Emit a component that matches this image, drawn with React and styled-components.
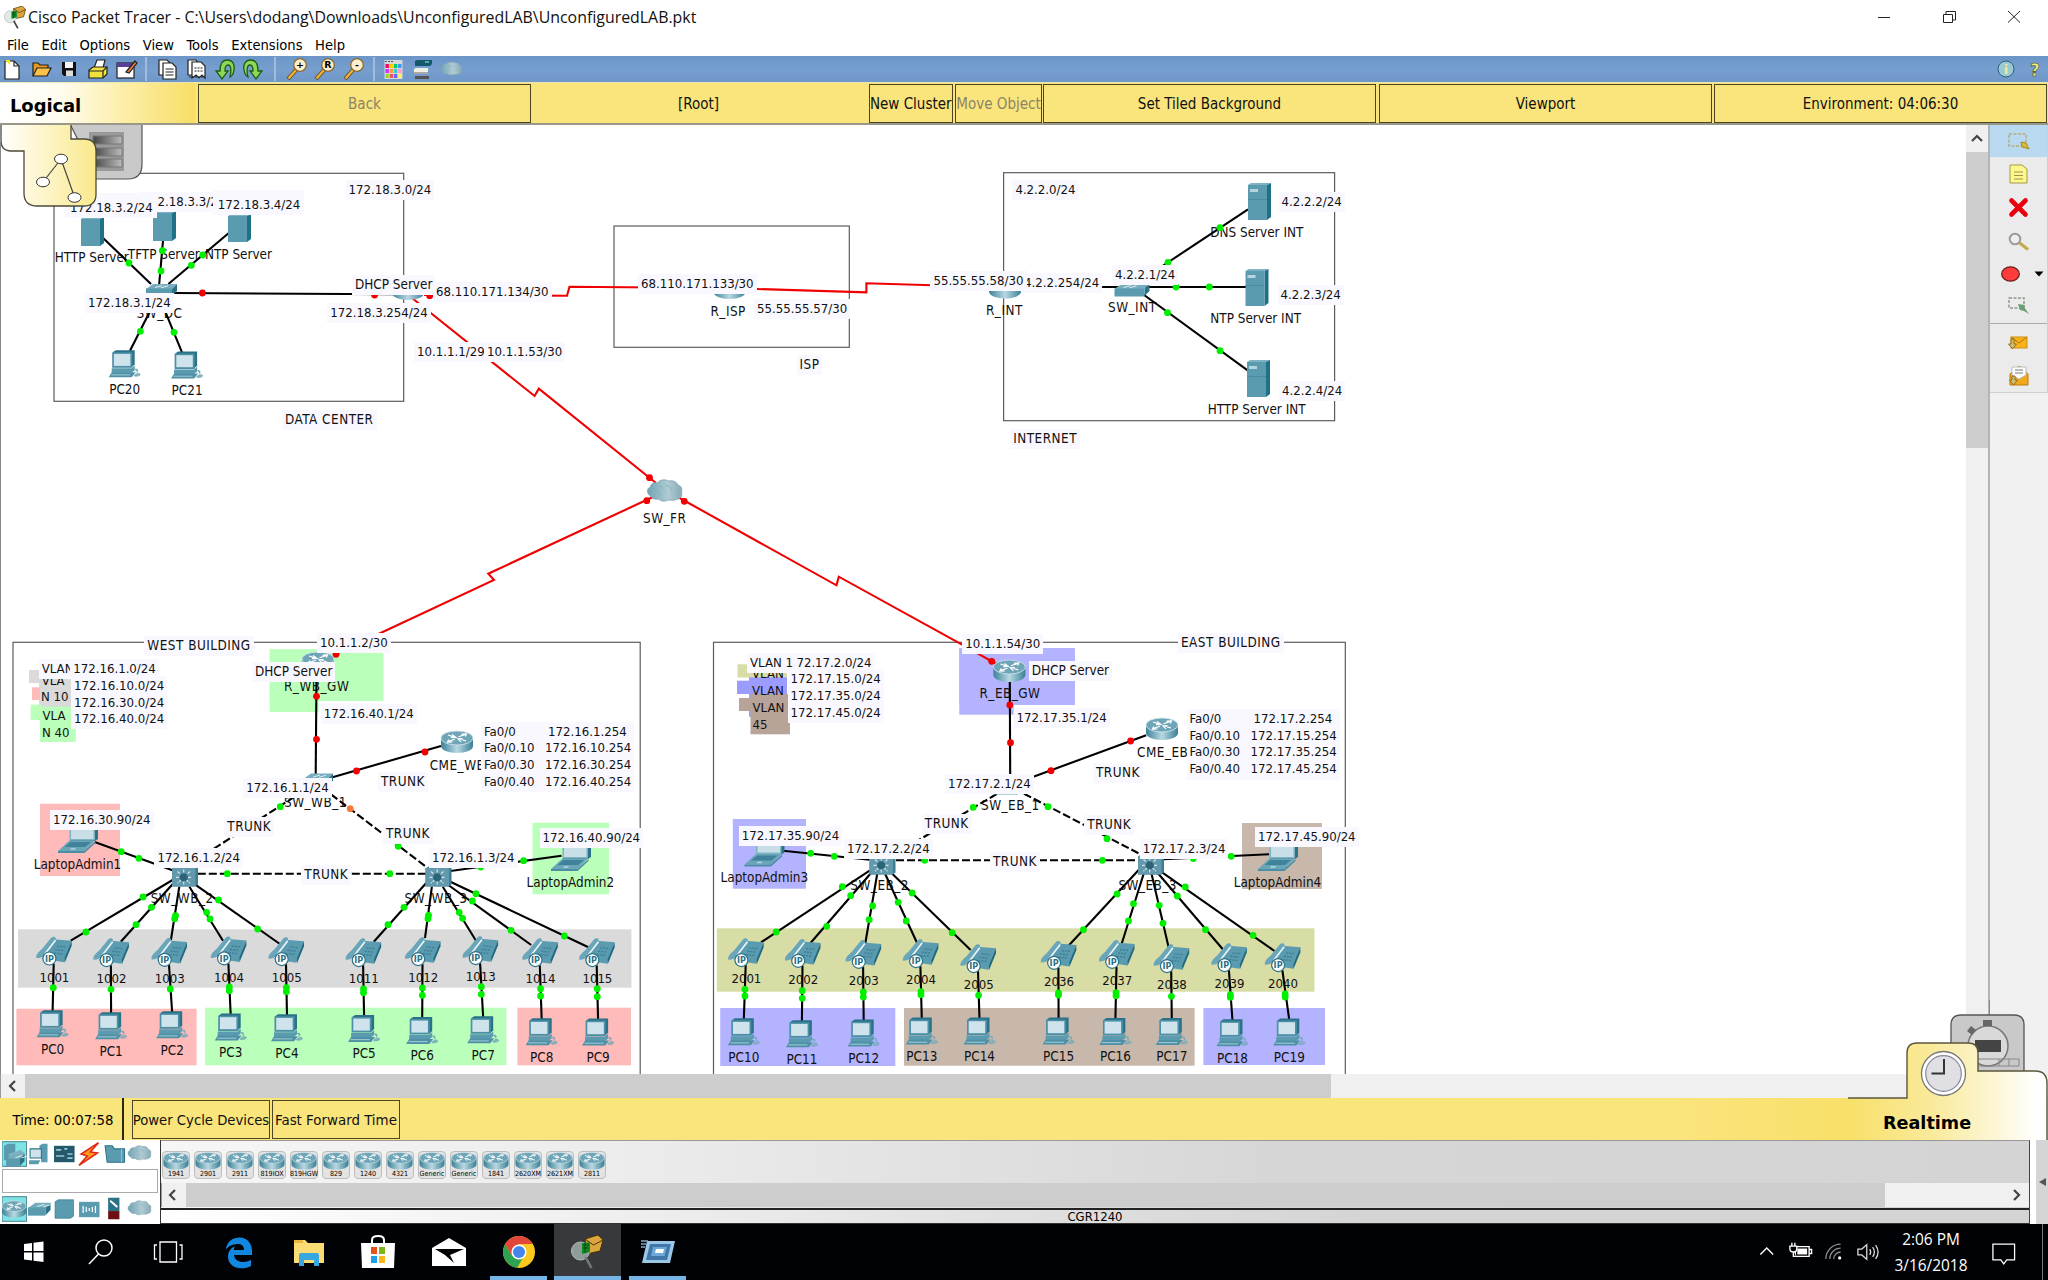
import React from 'react';
import styled, { createGlobalStyle, css } from 'styled-components';

const UI = '"DejaVu Sans Condensed", "DejaVu Sans", Tahoma, sans-serif';
const HEAD = '"DejaVu Sans", Verdana, sans-serif';
const WIN = '"Open Sans", "Noto Sans", sans-serif';

const Global = createGlobalStyle`
  html, body { margin: 0; background: #fff; }
  * { box-sizing: border-box; }
  body { font-family: ${UI}; color: #000; overflow: hidden; }
`;

const Window = styled.div`
  width: 2048px; height: 1280px; display: flex; flex-direction: column; background: #fff; overflow: hidden;
`;
const TitleBar = styled.header`
  height: 34px; flex: none; display: flex; align-items: center; padding-left: 4px;
`;
const Title = styled.div`
  font: 15.9px ${WIN}; margin-left: 1px; white-space: nowrap; flex: 1; color: #111;
`;
const WinButtons = styled.div`display: flex; svg { width: 65px; height: 30px; }`;
const MenuBar = styled.nav`
  height: 22px; flex: none; display: flex; align-items: center; gap: 12.6px; padding: 0 0 1px 7px;
  font-size: 14.6px;
`;
const Toolbar = styled.div`
  height: 26px; flex: none; background: linear-gradient(#6c96c8, #769fcf 50%, #6f98c9); display: flex; align-items: center;
  svg { width: 24px; height: 24px; }
`;
const ToolGroup = styled.div`
  display: flex; align-items: center; gap: 4.6px; padding: 0 ${p => p.$r || 3}px 0 ${p => p.$l || 0}px;
  border-right: ${p => (p.$last ? '0' : '2px solid #a3bcda')}; height: 24px;
`;
const Spacer = styled.div`flex: 1;`;

const NavBar = styled.div`
  height: 43px; flex: none; background: #fae47c; display: flex; border-bottom: 2px solid #99968a; padding-top: 1px;
  border-top: 1px solid #e9e6b8;
`;
const ModeHead = styled.div`
  width: 195px; margin: -1px 3px 0 0; padding: 11px 0 0 10px; font: bold 18px/24px ${HEAD}; letter-spacing: -0.1px;
  background: linear-gradient(90deg, #fff 0, #fffdf0 30%, #fcefab 62%, #f8de66 100%);
`;
const NavButton = styled.button`
  font: ${p => p.$f || 15}px ${UI}; height: 39px; width: ${p => p.$w}px; margin: 0 ${p => p.$mr || 0}px 0 0; padding: 1px 0 0;
  background: #fae47c; border: ${p => (p.$plain ? '0' : '1.5px solid #4b4520')}; white-space: nowrap; flex: none;
  color: ${p => (p.$off ? '#8a8468' : '#111')}; display: flex; align-items: center; justify-content: center;
`;

const Middle = styled.main`height: 973px; flex: none; display: flex;`;
const Stage = styled.div`width: 1966px; display: flex; flex-direction: column;`;
const Canvas = styled.section`
  position: relative; height: 949px; overflow: hidden; border-left: 1px solid #888; background: #fff;
`;
const Surface = styled.div`position: absolute; left: -1px; top: -125px; width: 1966px; height: 1074px;`;
const Layer = styled.svg`position: absolute; left: 0; top: 0; width: 1966px; height: 1080px;`;
const Label = styled.span.attrs(p => ({ style: { left: p.$x, top: p.$y - 8.5 } }))`
  position: absolute; font-size: 13.1px; line-height: 18px; height: 18px; white-space: pre; color: #111;
  ${p => p.$word && css`font-size: 13.4px;`}
  ${p => p.$caps && css`font-size: 13.4px; letter-spacing: 0.5px;`}
  ${p => p.$mid && css`transform: translateX(-50%);`}
  ${p => p.$note && css`background: #f8f8fe; padding: 0 3px; margin-left: -3px; height: 20px; margin-top: -1px; line-height: 20px;`}
  ${p => p.$grow && css`padding: 5px 4px 0 5px; margin: -6px 0 0 -5px; height: 25px;`}
`;
const AddressTable = styled.div.attrs(p => ({ style: { left: p.$x, top: p.$y } }))`
  position: absolute; background: #f8f8fe; display: grid; grid-template-columns: 61px auto; font-size: 13.1px;
  line-height: 16.7px; padding: 2px 3px; margin-left: -2px; white-space: pre; color: #111;
  span:nth-child(2) { padding-left: 3px; }
`;
const VScroll = styled.div`
  width: 24px; background: #f0f0f0; border-right: 2px solid #b4b4b4; display: flex; flex-direction: column;
  svg { width: 22px; height: 27px; flex: none; }
`;
const VThumb = styled.div`height: 296px; background: #cdcdcd;`;
const HScroll = styled.div`
  height: 24px; flex: none; display: flex; background: #f0f0f0; border-left: 1px solid #999;
  svg { width: 24px; height: 24px; flex: none; }
`;
const HThumb = styled.div`width: ${p => p.$w}px; background: #cdcdcd;`;
const SidePane = styled.aside`flex: 1; background: #f1f1f1; display: flex; flex-direction: column; overflow: hidden;`;
const SideTools = styled.div`
  height: 268px; background: #ebebeb; border: 1px solid #cfcfcf; border-width: 0 1px 1px 0;
  display: flex; flex-direction: column;
`;
const SideTool = styled.div`
  height: ${p => p.$h || 33}px; display: flex; align-items: center; justify-content: center; flex: none;
  background: ${p => (p.$on ? '#b9d9f1' : 'transparent')};
  border-bottom: ${p => (p.$line ? '1px solid #aaa' : '0')};
  svg { width: 58px; height: 32px; flex: none; }
`;

const TimeBar = styled.div`
  height: 42px; flex: none; display: flex; align-items: center; position: relative;
  background: linear-gradient(90deg, #fae47c 82%, #f8e069 90.2%);
`;
const Clock = styled.div`
  font-size: 14.8px; width: 124px; height: 42px; line-height: 44px; padding-left: 12.5px; border-right: 2px solid #2c2810; margin-right: 8px;
  white-space: nowrap;
`;
const ModeTab = styled.svg`position: absolute; z-index: 2; pointer-events: none; left: ${p => p.$x}px; top: ${p => p.$y}px; overflow: visible;`;
const RealtimeText = styled.div`
  position: absolute; z-index: 3; left: 1883px; top: 13px; font: bold 17.6px/24px ${HEAD};
`;

const Palette = styled.footer`height: 84px; flex: none; display: flex; background: #fff;`;
const Kinds = styled.div`
  width: 161px; border-right: 1.5px solid #333; display: flex; flex-direction: column; padding: 1px 0 0 2px;
`;
const KindRow = styled.div`display: flex; gap: 0.5px; svg { width: 24.6px; height: 26px; flex: none; }`;
const KindName = styled.div`height: 24px; width: 156px; border: 1.5px solid #aaa; margin: 2px 0 3px; background: #fff;`;
const Models = styled.div`
  width: 1869px; border-right: 1.5px solid #444; display: flex; flex-direction: column;
  background: linear-gradient(90deg, #f6f6f6 0, #ececec 25%, #d6d6d6 60%, #d4d4d4 100%); border-top: 1px solid #999;
`;
const ModelRow = styled.div`height: 43px; display: flex; gap: 4px; padding: 9.5px 0 0 1px;`;
const Model = styled.div`
  width: 28px; height: 28px; border: 1px solid #bdbdbd; border-radius: 4px; background: #e3e3e3; flex: none;
  display: flex; flex-direction: column; align-items: center; font-size: 7.1px; line-height: 8px; white-space: nowrap;
  svg { width: 26px; height: 18px; flex: none; }
`;
const ModelName = styled.div`
  margin-top: 1.5px; height: 16px; border-top: 2px solid #222; border-bottom: 1px solid #333; font-size: 13px; line-height: 14px; text-align: center;
  background: linear-gradient(90deg, #fff 0, #e4e4e4 40%, #d4d4d4 65%);
`;
const Collapse = styled.div`
  margin-left: 6px; flex: 1; background: #d5d5d5; display: flex; align-items: center; justify-content: center;
`;

const Taskbar = styled.footer`
  height: 56px; flex: none; background: #000206; display: flex; color: #fff; font: 15.4px/26px ${WIN};
`;
const Task = styled.div`
  width: ${p => p.$w || 70}px; margin-right: ${p => p.$mr || 0}px; height: 56px; display: flex; align-items: center; justify-content: center;
  background: ${p => (p.$active ? '#37393d' : 'transparent')};
  border-bottom: ${p => (p.$open ? '4px solid #76b5e8' : '4px solid transparent')};
  svg { width: 40px; height: 40px; overflow: visible; flex: none; margin-top: 3px; }
`;
const Tray = styled.div`
  display: flex; align-items: center;
  svg { width: 33.5px; height: 40px; flex: none; }
  svg:last-child { margin-left: 8.5px; }
`;
const When = styled.div`width: 94px; text-align: center; line-height: 26px; padding-top: 1px; white-space: nowrap;`;
const Peek = styled.div`width: 6px; border-left: 1px solid #777; height: 56px;`;
const Logo = styled.svg`&& { width: ${p => p.$s}px; height: ${p => p.$s}px; flex: none; }`;

/* ---------- device drawings ---------- */
const T1 = '#5a9bb0', T2 = '#2b7187';

const Router = ({ x, y }) => (
  <g transform={`translate(${x} ${y})`}>
    <path d="M0 7v8c0 4 7 7 16 7s16-3 16-7V7z" fill="url(#cyl)" />
    <ellipse cx="16" cy="7" rx="16" ry="7" fill="#6ea5b7" stroke="#d5e6ec" strokeWidth=".8" />
    <path d="M7 4l7 2.400M25 10l-7-2.200M24 3.600l-6.500 2.200M14 8.300L7.500 10.400M11 3.400l4 3-5 .3M20 10.800l-3-3 4.500-.1M20.500 3.200l5-.2-1.200 2.400M11.500 11l-5 .2 1.200-2.600" stroke="#fff" strokeWidth="1.200" fill="none" />
  </g>
);
const Server = ({ x, y, h = 29, face }) => (
  <g transform={`translate(${x} ${y})`}>
    <path d="M0 2L3 0H23L19 2z" fill="#7fb3c4" />
    <path d={`M19 2L23 0V${h - 3}L19 ${h}z`} fill="#1f7188" />
    <rect y="2" width="19" height={h - 2} fill={T1} />
    {face && <><rect x="2" y="6" width="8" height="3" fill="#b5d4de" /><path d="M0 16.500H19" stroke="#4a8598" strokeWidth=".8" /></>}
  </g>
);
const Pc = ({ x, y }) => (
  <g transform={`translate(${x - 16} ${y})`}>
    <path d="M4 2L7 0H26V14L23 17z" fill={T2} />
    <rect x="3.500" y="2" width="20" height="15.500" fill="#4b90a6" />
    <rect x="5.200" y="3.600" width="16.500" height="12" fill="#cfe3ec" />
    <path d="M3 18h20l3-3v5l-3 2.500H3z" fill={T1} />
    <path d="M3 22L0 27H23L27 22z" fill="#4e91a7" /><path d="M2.500 24.600h19" stroke="#a4cad6" />
    <path d="M26 19c4-1 3 2 2.500 3.200M25.500 25.600c1-2.400 5-3.600 6-1.600 .4 1.300-3 2.400-6 1.600z" fill="#8fb5c2" stroke={T1} strokeWidth=".6" />
  </g>
);
const Phone = ({ x, y }) => (
  <g transform={`translate(${x} ${y})`}>
    <path d="M8 14L17 2.500 35.500 4 28 25.500 6 22z" fill={T1} />
    <path d="M35.500 4V9L28.500 26V21z" fill="#1f6a80" />
    <path d="M0 20C0 17 3 15 6 12L15 1c1.500-1.600 4-1 4.600.4L19 4 8 18c-1 2-4 3.600-8 3.400z" fill="#6aa6ba" />
    <path d="M19.300 3.500L8.500 17.500" stroke="#eef6f8" strokeWidth="1.600" />
    <path d="M21 9.600l9 .8M19 13l9 .8M18 16.400l9 .8" stroke="#3d7f95" strokeWidth="1.400" strokeDasharray="2 1" />
    <circle cx="13.200" cy="21.800" r="6.500" fill="#fff" stroke="#2b7187" strokeWidth="1.200" />
    <text x="13.200" y="25.200" fontSize="9" fontWeight="bold" fill="#2b7187" textAnchor="middle" fontFamily="DejaVu Sans Condensed">IP</text>
  </g>
);
const Laptop = ({ x, y }) => (
  <g transform={`translate(${x} ${y})`}>
    <path d="M12 0H38L40 1V14L37 16H12z" fill={T2} />
    <path d="M11.500 0H37V15.500H11.500z" fill="#7fb2c3" /><path d="M13 1.500H35.500V14H13z" fill="#c8dfe8" />
    <path d="M11.500 15.500H37L26 26H0z" fill="#6aa6ba" /><path d="M12.500 17H33L27 22H6.500z" fill="#3f8299" />
    <path d="M0 26H26L37.500 16V18L26.500 28H0z" fill="#4c8ea3" /><path d="M13 23.200h5l-1 1.600h-5z" fill="#b7d4dd" />
  </g>
);
const Switch = ({ x, y, w = 32 }) => (
  <g transform={`translate(${x} ${y})`}>
    <path d={`M0 5L7 0H${w}L${w - 5} 5z`} fill="#78adbf" />
    <path d={`M${w - 5} 5L${w} 0V7L${w - 5} 12z`} fill={T2} /><rect y="4.500" width={w - 5} height="8" fill={T1} />
    <path d="M9 3.600l7-2M15 3.800l7-2" stroke="#e5f1f5" strokeWidth=".9" />
  </g>
);
const CoreSwitch = ({ x, y }) => (
  <g transform={`translate(${x} ${y})`}>
    <path d="M0 2L3 0H26V18L23 20H0z" fill="#3c7d93" /><rect y="1.500" width="23.500" height="18.500" fill="#6399ac" />
    <path d="M11.700 3V18.500M4 10.800H19.500M5.500 5L18 16.800M18 5L5.500 16.800" stroke="#d4e6ec" strokeWidth="1.200" strokeDasharray="3 1" />
    <circle cx="11.700" cy="10.800" r="4" fill="#2b6478" />
  </g>
);
const Cloud = ({ x, y, s = 1 }) => (
  <g transform={`translate(${x} ${y}) scale(${s})`}>
    <path d="M3 16C-1 14-1 8 3 7 3 3 8 2 10 3 12-.5 18-1 21 1c4-1 9 1 9 4 4 1 5 4 4 6 1 5-1 8-4 8-4 2-7 1-9 1-4 2-8 1-10-1-4 1-7-1-8-3z" fill="url(#cl)" stroke="#7ea2ae" strokeWidth=".8" />
    <path d="M8 12c3-2 5 0 5 3M18 6c3-1 6 1 6 4M12 6c2 0 3 1 3 3" fill="none" stroke="#8fb3bf" />
  </g>
);

/* ---------- topology data ---------- */
const FRAMES = [[54, 173.3, 349.7, 228], [614, 226, 235.3, 121.3], [1003.6, 172.7, 331, 248], [13, 642.3, 627.2, 500], [713.5, 642.3, 631.8, 500]];
const G = '#baffba', P = '#ffbaba', S = '#dadada', B = '#b3b3ff', O = '#d8dca5', W = '#c8b8ac';
const ZONES = [
  [269.8, 649.3, 383.5, 701, G], [269.8, 649.3, 318.6, 712, G], [40, 803.7, 120, 876, P], [532.5, 822.7, 609, 894.3, G],
  [18, 929.3, 631.4, 987.7, S], [16.4, 1008.7, 196.6, 1065.3, P], [205, 1007.7, 506.4, 1065.3, G], [517.3, 1007.7, 631, 1065.3, P],
  [29, 670, 40.4, 683, S], [39.1, 677, 71.5, 707, S], [32, 687.3, 40, 700, P], [30.7, 704.7, 41, 720, G], [40, 706.7, 75.8, 742, G],
  [959.3, 648, 1075, 705, B], [959.3, 648, 1013.6, 714.7, B], [732.8, 819, 806, 888.7, B], [1242, 823, 1322, 889, W],
  [716.8, 928.3, 1314.5, 991.7, O], [720.2, 1008, 895.3, 1066, B], [904, 1008, 1194.6, 1065.7, W], [1203.4, 1008, 1325, 1065, B],
  [737.5, 664.3, 787, 677.5, O], [737, 680.7, 750, 694, '#9c9cff'], [749, 677.3, 787, 716.7, '#9c9cff'],
  [739, 698, 751, 711, '#b8a399'], [750.5, 694, 790, 734.3, '#b8a399'],
];
const PHONES = [
  ['1001', 36.2, 936.7, [987.7]], ['1002', 93.4, 938.3, [989.3]], ['1003', 151.5, 938, [989]], ['1004', 210.9, 936.5, [987, 990.7]],
  ['1005', 268.5, 937.3, [987.7, 991.7]], ['1011', 345.6, 938.3, [989, 992.7]], ['1012', 405, 937.3, [988, 995.3]],
  ['1013', 462.6, 936.3, [986.7, 994.3]], ['1014', 522.3, 938.3, [988.7, 996]], ['1015', 579.2, 938.3, [988.7, 996.7]],
  ['2001', 728.2, 938.3, [989.3, 996]], ['2002', 785, 939, [990.7, 998.3]], ['2003', 845.6, 940, [992, 997]],
  ['2004', 902.9, 939.3, [991.7, 994.7]], ['2005', 960.5, 944.3, [995.3]], ['2036', 1040.9, 941, [993, 995]],
  ['2037', 1099, 940, [992.7, 995.7]], ['2038', 1153.7, 944.3, [996.3]], ['2039', 1211.4, 943.3, [994.7, 997.3]],
  ['2040', 1264.9, 943.3, [994, 997]],
];
const PCS = [
  [52.6, 1049], [111.1, 1051], [172.2, 1050], [230.7, 1052.3], [287, 1053], [364.1, 1053.7], [422.2, 1055.7], [483.2, 1055],
  [541.7, 1057], [598.1, 1057.3], [743.8, 1057], [801.9, 1059], [863.7, 1058.3], [921.8, 1056.3], [979.5, 1056.3],
  [1058.6, 1056.3], [1115.4, 1056.7], [1171.8, 1056.7], [1232.5, 1058], [1289.3, 1057.3], [124.7, 389], [187.1, 390.3],
];
const LINKS = [
  [103.3, 238.3, 151, 284], [163, 240.7, 159.2, 284], [228.5, 233.3, 168.4, 284], [174, 293, 393, 294.3], [149.2, 312.7, 130, 350.7],
  [165.7, 312.7, 182, 352.3], [1248, 209.3, 1155, 271], [1004, 287, 1246.3, 287], [1140, 292, 1248, 370.7],
  [316.5, 675, 315.7, 775], [332.5, 777.3, 441, 746], [94.7, 842, 173.8, 870.7], [561.5, 855.7, 450.4, 871],
  [172.6, 880, 70.7, 940.7], [173.4, 883.3, 120.8, 941.7], [179.3, 886.7, 170.9, 940], [189.4, 886.7, 223, 940.7], [194.9, 884.3, 279.9, 944],
  [426, 883.3, 373.8, 941.7], [431.9, 886.7, 425, 938], [442.8, 886.7, 476, 940.7], [448.3, 885, 531.2, 945], [450.4, 881.7, 588.4, 947.3],
  [1009.8, 680, 1010.2, 775], [1033.4, 776.7, 1146.2, 735.3], [783, 850.7, 869.6, 859.7], [1269, 854.3, 1163.8, 859.3],
  [869.6, 870.7, 761, 942.3], [871.7, 872.3, 810.3, 943.3], [877.2, 874, 865.4, 942.7], [885.2, 874, 917.2, 943.3], [890.7, 872.3, 970.6, 950],
  [1138.6, 870, 1068.3, 946], [1143.6, 874, 1121.3, 945], [1151.6, 874, 1168.5, 946.7], [1157.5, 872.7, 1222.8, 949.3], [1159.6, 870.7, 1274.5, 951],
];
const TRUNKS = [
  [294.6, 796.7, 184, 868], [331, 794.3, 426, 866.7], [197.8, 873.7, 426, 873.7], [996.7, 794, 885, 860], [1024, 793.7, 1138.6, 853.3], [896, 860.3, 1138.6, 860.3],
];
const SERIAL = [
  'M424 295L567 295.700 569.500 286.800 716 288', 'M740 288.500L866.400 292.300V283.300L990 287', 'M412 298L534.600 396 538.800 388.700 656 483',
  'M655 496L488.300 573.700 494 580 385.400 630.700 336 654', 'M676 496L836.500 585.300 838.800 576.700 961.600 644.300 1000 666',
];
const UP = [
  [129, 263], [162.3, 250.7], [161, 271], [202.8, 255], [191.3, 265.3], [140.4, 331.3], [174, 332.3], [1220, 227.7], [1168, 262.3], [1176, 287], [1209.3, 287],
  [1167.5, 312.7], [1220, 350.7], [280.3, 806.7], [398.2, 846.3], [227.3, 873.7], [389.8, 873.7], [121.2, 851.7], [138.9, 858.3], [523.6, 860.7], [480.7, 867],
  [143, 897], [85.9, 932], [151.5, 907.3], [136, 924.7], [175.5, 915.7], [174.7, 918.7], [206.7, 912.3], [210, 919], [218.5, 900], [257.6, 929],
  [404, 907.3], [388, 924.7], [428.5, 915.3], [428, 918.7], [459.2, 912.3], [462.6, 918.3], [472.3, 901], [511, 930.3], [476, 893.7], [564.4, 936],
  [973.2, 807.3], [1048, 806.7], [1107, 838.7], [924.8, 860.3], [1102.4, 860.3], [810.7, 853.3], [834.3, 856.3], [1231.2, 856.3], [1193.3, 858.5],
  [842.3, 886.7], [776.2, 932], [850.7, 895.7], [826.7, 926.3], [872.6, 906], [869.2, 919.7], [898.2, 902.3], [906.2, 921], [912.1, 893], [952.1, 932.7],
  [1117.1, 894], [1083.4, 929.7], [1133.5, 903.7], [1128.5, 921], [1159.2, 905.3], [1163, 923.3], [1177.3, 896], [1205.5, 929.7], [1185.3, 887], [1253, 935.3],
];
const DOWN = [
  [202.4, 293], [374.6, 295], [429.7, 295.7], [649.5, 477.7], [646.8, 500.7], [684.3, 501.3], [336, 654.3], [991.7, 661.3],
  [316.5, 696.3], [316.5, 739.3], [356.5, 771], [425, 752], [1009.8, 705], [1010.5, 742.7], [1051, 770.7], [1130.6, 741],
];
const NAMES = [
  ['HTTP Server', 54.7, 257.7], ['TFTP Server', 127.8, 254.3], ['NTP Server', 205, 254], ['SW_DC', 136.6, 313.3],
  ['DNS Server INT', 1210.3, 232.3], ['SW_INT', 1108, 307.7], ['NTP Server INT', 1210.3, 318], ['HTTP Server INT', 1207.7, 409],
  ['R_ISP', 710.5, 311.3], ['R_INT', 986, 310.7], ['SW_FR', 643, 518], ['R_WB_GW', 284, 686], ['VLA', 41.7, 680.7], ['N 10', 41, 696.3],
  ['VLA', 42.5, 715.7], ['N 40', 42, 732.3], ['CME_WB', 429.7, 765], ['SW_WB_1', 284, 802.7], ['LaptopAdmin1', 33.7, 864.3],
  ['LaptopAdmin2', 526.6, 882.7], ['SW_WB_2', 150.7, 898.3], ['SW_WB_3', 404.5, 898.3], ['R_EB_GW', 979.5, 693.7],
  ['VLAN', 752, 673.7], ['VLAN', 752, 690], ['VLAN', 752.5, 707.3], ['45', 752.5, 724.3], ['CME_EB', 1137, 752.3], ['SW_EB_1', 981, 805.7],
  ['LaptopAdmin3', 720.6, 877], ['LaptopAdmin4', 1233.7, 882], ['SW_EB_2', 850.3, 885.7], ['SW_EB_3', 1118.4, 885.7],
];
const NOTES = [
  ['172.18.3.0/24', 348.6, 189.7], ['172.18.3.3/24', 142.6, 201.3], ['172.18.3.2/24', 70, 207.3, true], ['172.18.3.4/24', 217.7, 204, true],
  ['172.18.3.1/24', 88, 302], ['DHCP Server', 355, 284.3], ['172.18.3.254/24', 330.2, 312.3], ['68.110.171.134/30', 436, 291.3],
  ['10.1.1.1/29', 417, 351.3], ['10.1.1.53/30', 487, 351.3], ['DATA CENTER', 285, 419.3], ['4.2.2.0/24', 1015.4, 189],
  ['4.2.2.2/24', 1281.6, 201.3], ['4.2.2.1/24', 1115, 274.7], ['4.2.2.3/24', 1280.5, 294], ['4.2.2.4/24', 1282, 390],
  ['INTERNET', 1013.2, 438], ['68.110.171.133/30', 641, 283.3], ['55.55.55.57/30', 757, 308], ['4.2.2.254/24', 1024, 282], ['55.55.55.58/30', 933.4, 280.3],
  ['ISP', 799.5, 364], ['WEST BUILDING', 147.3, 645], ['10.1.1.2/30', 320, 642.7], ['DHCP Server', 255, 671.3],
  ['VLAN', 41.7, 668.3], ['172.16.1.0/24', 73.2, 668.3], ['172.16.10.0/24', 74, 685], ['172.16.30.0/24', 74, 702], ['172.16.40.0/24', 74, 718.7],
  ['172.16.40.1/24', 323.7, 713], ['TRUNK', 381, 781], ['172.16.1.1/24', 246.2, 787.3], ['TRUNK', 227.3, 826.7],
  ['172.16.30.90/24', 53, 819.3], ['TRUNK', 386, 833.7], ['172.16.40.90/24', 542.5, 837.3], ['172.16.1.2/24', 157.4, 857],
  ['172.16.1.3/24', 431.9, 857], ['TRUNK', 304.3, 874.7], ['10.1.1.54/30', 965.2, 643.7], ['DHCP Server', 1031.7, 670.7],
  ['EAST BUILDING', 1181, 642.7], ['VLAN 1', 750, 662], ['72.17.2.0/24', 796.4, 662], ['172.17.15.0/24', 790.5, 678.7],
  ['172.17.35.0/24', 790.5, 695.3], ['172.17.45.0/24', 790.5, 712.3], ['172.17.35.1/24', 1016.5, 717.3], ['TRUNK', 1096, 772.3],
  ['172.17.2.1/24', 948, 783.7], ['TRUNK', 924.8, 823.7], ['TRUNK', 1087.2, 824.3], ['172.17.35.90/24', 741.7, 835.7],
  ['172.17.2.2/24', 847, 848], ['172.17.2.3/24', 1142.8, 848.3], ['172.17.45.90/24', 1258, 836.3], ['TRUNK', 993, 861.3],
];
const isCaps = t => /^[A-Z_ 0-9]*[A-Z][A-Z_ 0-9]*$/.test(t) && !t.startsWith('VLA') && !t.startsWith('N ');
const isWord = t => /[a-z]/.test(t);

const Seg = ({ s }) => <line x1={s[0]} y1={s[1]} x2={s[2]} y2={s[3]} />;

const Topology = () => (
  <Surface>
    <Layer>
      <defs>
        <linearGradient id="cyl"><stop offset="0" stopColor="#3c8299" /><stop offset=".5" stopColor="#b8d8e2" /><stop offset="1" stopColor="#3a8097" /></linearGradient>
        <linearGradient id="cl"><stop offset="0" stopColor="#6fa3b4" /><stop offset=".6" stopColor="#b0cbd4" /><stop offset="1" stopColor="#86aab6" /></linearGradient>
      </defs>
      {ZONES.map((z, i) => <rect key={i} x={z[0]} y={z[1]} width={z[2] - z[0]} height={z[3] - z[1]} fill={z[4]} />)}
      {FRAMES.map((f, i) => <rect key={i} x={f[0]} y={f[1]} width={f[2]} height={f[3]} fill="none" stroke="#5c5c5c" strokeWidth="1.200" />)}
    </Layer>
    {NAMES.map((n, i) => <Label key={i} $caps={isCaps(n[0])} $word={isWord(n[0])} $x={n[1]} $y={n[2]}>{n[0]}</Label>)}
    {PHONES.map(p => <Label key={p[0]} $x={p[1] + 3.2} $y={p[2] + 40.6}>{p[0]}</Label>)}
    {PCS.map((p, i) => <Label key={i} $mid $word $x={p[0]} $y={p[1]}>{`PC${i}`}</Label>)}
    <Layer>
      <g stroke="#000" strokeWidth="2.100">
        {LINKS.map((s, i) => <Seg key={i} s={s} />)}
        {PHONES.map((p, i) => <line key={i} x1={p[1] + 17.5} y1={p[2] + 27} x2={PCS[i][0]} y2={PCS[i][1] - 37} />)}
      </g>
      <g stroke="#000" strokeWidth="2.100" strokeDasharray="8 3">{TRUNKS.map((s, i) => <Seg key={i} s={s} />)}</g>
      <g stroke="#f00000" strokeWidth="2.100" fill="none">{SERIAL.map((d, i) => <path key={i} d={d} />)}</g>
      <Router x={392} y={278} /><Router x={713.5} y={277} /><Router x={989} y={276.5} />
      <Router x={302} y={652} /><Router x={441} y={731} /><Router x={993.4} y={660} /><Router x={1146} y={718} />
      <Server x={81} y={217} /><Server x={153} y={211} h={30} /><Server x={228} y={214} h={28} />
      <Server x={1248} y={183} h={37} face /><Server x={1245.5} y={269} h={37} face /><Server x={1247} y={360} h={37} face />
      <Switch x={146} y={284} w={31} /><Switch x={1114.5} y={284} w={35} /><Switch x={304} y={773.5} w={29} /><Switch x={994} y={782} w={29} />
      <CoreSwitch x={172} y={866.5} /><CoreSwitch x={425.5} y={866.5} /><CoreSwitch x={869.5} y={854.5} /><CoreSwitch x={1138} y={854.5} />
      <Cloud x={647.5} y={480} />
      <Laptop x={58} y={825} /><Laptop x={551} y={843} /><Laptop x={744.5} y={838.5} /><Laptop x={1258} y={843} />
      {PCS.map((p, i) => <Pc key={i} x={p[0]} y={p[1] - 38.7} />)}
      {PHONES.map((p, i) => <Phone key={i} x={p[1]} y={p[2]} />)}
      <g fill="#00f000">
        {UP.map((d, i) => <circle key={i} cx={d[0]} cy={d[1]} r="3.400" />)}
        {PHONES.map((p, i) => p[3].map(y => <circle key={i + '-' + y} cx={p[1] + 17.5 + (PCS[i][0] - p[1] - 17.5) * 0.4} cy={y} r="3.400" />))}
      </g>
      <g fill="#f00000">{DOWN.map((d, i) => <circle key={i} cx={d[0]} cy={d[1]} r="3.400" />)}</g>
      <circle cx="350.200" cy="808.700" r="3.400" fill="#f47a3c" />
    </Layer>
    {NOTES.map((n, i) => <Label key={i} $note $grow={n[3]} $caps={isCaps(n[0])} $word={isWord(n[0])} $x={n[1]} $y={n[2]}>{n[0]}</Label>)}
    <AddressTable $x={483} $y={721.5}>
      <span>Fa0/0</span><span>172.16.1.254</span><span>Fa0/0.10</span><span>172.16.10.254</span>
      <span>Fa0/0.30</span><span>172.16.30.254</span><span>Fa0/0.40</span><span>172.16.40.254</span>
    </AddressTable>
    <AddressTable $x={1188.5} $y={709}>
      <span>Fa0/0</span><span>172.17.2.254</span><span>Fa0/0.10</span><span>172.17.15.254</span>
      <span>Fa0/0.30</span><span>172.17.35.254</span><span>Fa0/0.40</span><span>172.17.45.254</span>
    </AddressTable>
  </Surface>
);

/* ---------- toolbar glyphs (24x24) ---------- */
const I = ({ children, w = 24, h = 24 }) => <svg viewBox={`0 0 ${w} ${h}`}>{children}</svg>;
const k = { stroke: '#222', strokeWidth: 1.2 };
const NewI = () => <I><path d="M5 4h9l5 5v13H5z" fill="#fff" {...k} /><path d="M14 4v5h5" fill="none" {...k} /><path d="M5 3h5v5z" fill="#ffe600" /></I>;
const OpenI = () => <I><path d="M4 19V6h5l2 2h8v3" fill="#e89a1c" {...k} /><path d="M4 19l4-8h14l-4 8z" fill="#ffc14a" {...k} /></I>;
const SaveI = () => <I><path d="M5 5h14v14H7l-2-2z" fill="#111" /><rect x="8" y="5" width="8" height="6" fill="#f5f5f5" /><rect x="9" y="13.500" width="7" height="5.500" fill="#ddd" /></I>;
const PrintI = () => <I><path d="M8 11l3-8h8l-2 8z" fill="#fff" {...k} /><path d="M3 13l4-3h14v7l-4 4H3z" fill="#f0e23a" {...k} /><path d="M3 14h14l4-4M17 14v7" fill="none" {...k} /></I>;
const WizI = () => <I><rect x="3" y="6" width="17" height="15" fill="#fff" {...k} /><rect x="3" y="6" width="17" height="4" fill="#5a3f9a" /><path d="M12 15l9-11 2 2-8 10z" fill="#e8793a" {...k} /></I>;
const CopyI = () => <I><path d="M4 3h8l3 3v12H4z" fill="#fff" {...k} /><path d="M8 6h9l4 4v12H8z" fill="#fff" {...k} /><path d="M10.500 12h8M10.500 15h8M10.500 18h8" {...k} /></I>;
const PasteI = () => <I><path d="M4 3h8l2 3v12H4z" fill="#fff" {...k} /><path d="M8 5h9l4 4v12l-3-3-3 3-3-3-4 3z" fill="#fff" {...k} /><path d="M10.500 11h8M10.500 14h8M5 20h15" {...k} strokeDasharray="2 1" /></I>;
const UndoI = ({ flip }) => <I><g transform={flip ? 'translate(24 0) scale(-1 1)' : ''}><path d="M3 14h4C7 7 9 3 14 3c6 0 8 5 7 10-.4 3-2 6-4 7 1-4 2-12-2-12-3 0-3 3-3 6h3l-6 8z" fill="#8ed858" stroke="#1c5c14" strokeWidth="1.300" /></g></I>;
const ZoomI = ({ t }) => <I><path d="M3 22l8-9" stroke="#6b4a16" strokeWidth="4" /><path d="M3.500 21.500l7.500-8.500" stroke="#f0b63c" strokeWidth="2.200" /><circle cx="15" cy="8" r="6.300" fill="#ffeecb" stroke="#8a6a2c" strokeWidth="1.300" /><text x="15" y="11.300" fontSize="9.500" fontWeight="bold" textAnchor="middle" fontFamily="DejaVu Sans">{t}</text></I>;
const HUES = ['#f06', '#fc0', '#0c6', '#39f', '#c3f', '#f93', '#3cc', '#f9c', '#9d3', '#e55', '#66f', '#fe6'];
const PaletteI = () => <I><rect x="3.500" y="3" width="18" height="19" fill="#d8d8d8" /><path d="M4 4.500h9" stroke="#555" strokeDasharray="2 1" />{HUES.map((c, i) => <rect key={c} x={4.5 + (i % 4) * 4.2} y={7 + Math.floor(i / 4) * 5} width="3.400" height="4" fill={c} />)}</I>;
const CustomI = () => <I><path d="M5 4l2-1h15v4l-2 2H5z" fill="#14586a" /><path d="M15 5h4" stroke="#8fd" /><path d="M4 12l2-1h12v4H4z" fill="#f0efe4" /><path d="M4 15h14v2H4z" fill="#aaa" /><path d="M5 19h14v3H5z" fill="#555" /></I>;
const CloudI = () => <I><Cloud x={1.500} y={5} s={0.62} /></I>;
const Arrow = ({ d, w = 24, h = 24 }) => <svg viewBox={`0 0 ${w} ${h}`}><path d={d} fill="none" stroke="#444" strokeWidth="2.200" /></svg>;

const AppIcon = ({ s = 27, dark }) => (
  <Logo $s={s} viewBox="0 0 34 34">
    <path d="M14 4l13-4 5 5-3 11-13 3z" fill="#dba63c" stroke="#4a3208" /><path d="M14 4l8.500 6L32 5" fill="none" stroke="#4a3208" />
    <circle cx="9.500" cy="16" r="9" fill={dark ? '#8f9d9a' : '#dfe9e6'} stroke="#b5bcb9" />
    <path d="M11 8l8-1v10l-8 2z" fill="#128a26" /><path d="M12 10h6M12 13h6M14 8v10" stroke="#043f0c" strokeWidth=".8" />
    <path d="M14.500 22l6 11" stroke={dark ? '#777' : '#444'} strokeWidth="2.600" />
  </Logo>
);

const MODELS = ['1941', '2901', '2911', '819IOX', '819HGW', '829', '1240', '4321', 'Generic', 'Generic', '1841', '2620XM', '2621XM', '2811'];

export default function App() {
  return (
    <Window>
      <Global />
      <TitleBar>
        <AppIcon s={23} />
        <Title>Cisco Packet Tracer - C:\Users\dodang\Downloads\UnconfiguredLAB\UnconfiguredLAB.pkt</Title>
        <WinButtons>
          <svg viewBox="0 0 65 30"><path d="M25 15.500h12" stroke="#222" /></svg>
          <svg viewBox="0 0 65 30"><path d="M25.500 12.500h9v8h-9zM28 12v-2.500h9.500v8.500H35" fill="none" stroke="#222" /></svg>
          <svg viewBox="0 0 65 30"><path d="M25 9l12 11.500M37 9l-12 11.500" stroke="#222" /></svg>
        </WinButtons>
      </TitleBar>
      <MenuBar>
        {['File', 'Edit', 'Options', 'View', 'Tools', 'Extensions', 'Help'].map(m => <span key={m}>{m}</span>)}
      </MenuBar>
      <Toolbar>
        <ToolGroup $r={7}><NewI /><OpenI /><SaveI /><PrintI /><WizI /></ToolGroup>
        <ToolGroup $l={8} $r={9}><CopyI /><PasteI /><UndoI /><UndoI flip /></ToolGroup>
        <ToolGroup $l={8.5} $r={7}><ZoomI t="+" /><ZoomI t="R" /><ZoomI t="-" /></ToolGroup>
        <ToolGroup $l={6.5} $last><PaletteI /><CustomI /><CloudI /></ToolGroup>
        <Spacer />
        <ToolGroup $last $r={1.5}>
          <I><circle cx="12" cy="12" r="8" fill="#9cc9d6" stroke="#2c5f72" /><text x="12" y="17" fontSize="13" fontWeight="bold" fill="#f3f08a" textAnchor="middle">i</text></I>
          <I><text x="12" y="18.500" fontSize="18" fontWeight="bold" fill="#f6f27a" stroke="#4a4a20" strokeWidth=".6" textAnchor="middle">?</text></I>
        </ToolGroup>
      </Toolbar>
      <NavBar>
        <ModeHead>Logical</ModeHead>
        <NavButton $w={333} $off>Back</NavButton>
        <NavButton $w={335} $plain $mr={3}>[Root]</NavButton>
        <NavButton $w={83.5} $mr={2.5}>New Cluster</NavButton>
        <NavButton $w={87} $off $mr={1}>Move Object</NavButton>
        <NavButton $w={333} $mr={3}>Set Tiled Background</NavButton>
        <NavButton $w={333} $mr={2}>Viewport</NavButton>
        <NavButton $w={333}>Environment: 04:06:30</NavButton>
      </NavBar>
      <Middle>
        <Stage>
          <Canvas>
            <Topology />
            <ModeTab $x={-1} $y={-1} width="150" height="90">
              <defs>
                <linearGradient id="lg" gradientUnits="userSpaceOnUse" x1="0" x2="96" y1="0" y2="0"><stop offset="0" stopColor="#fff" /><stop offset="1" stopColor="#fae98c" /></linearGradient>
                <linearGradient id="slot"><stop offset="0" stopColor="#444" /><stop offset="1" stopColor="#bbb" /></linearGradient>
              </defs>
              <path d="M70 0H142V40q0 15-14 15H80V20z" fill="#c9c9c9" stroke="#555" strokeWidth="1.200" />
              <rect x="89" y="8" width="35" height="39" fill="#999" />
              <path d="M93 12h29v8H93zM93 24h29v8H93zM93 35h29v8H93z" fill="url(#slot)" stroke="#777" />
              <path d="M0 0H71V15H84q12 0 12 12V70q0 12-12 12H37q-13 0-13-13V27H10Q1 26 1 17z" fill="url(#lg)" />
              <path d="M71 0V15H84q12 0 12 12V70q0 12-12 12H37q-13 0-13-13V27H10Q1 26 1 17V0" fill="none" stroke="#4c4a3a" strokeWidth="1.300" />
              <path d="M61 35L43 58M61 35L74.500 73" stroke="#444" strokeWidth="1.200" />
              <g fill="#fff" stroke="#333"><ellipse cx="61" cy="35" rx="6.500" ry="4.800" /><ellipse cx="43" cy="58" rx="6.500" ry="4.800" /><ellipse cx="74.500" cy="73.500" rx="6.500" ry="4.800" /></g>
            </ModeTab>
          </Canvas>
          <HScroll><Arrow d="M14 7l-5 5 5 5" /><HThumb $w={1306} /></HScroll>
        </Stage>
        <VScroll><Arrow w={22} h={27} d="M6 16l5-5 5 5" /><VThumb /></VScroll>
        <SidePane>
          <SideTools>
            <SideTool $on $h={32}><svg viewBox="0 0 58 32"><rect x="19" y="9" width="17" height="12" fill="none" stroke="#b8ab78" strokeWidth="1.500" strokeDasharray="3 1.500" /><path d="M31 17l5 1 1 2 2 4-3-1-4-1z" fill="#d8b93c" stroke="#a88c20" /></svg></SideTool>
            <SideTool $h={34}><svg viewBox="0 0 58 32"><path d="M20 7h12l5 4v14H20z" fill="#fdf78c" stroke="#a39a4c" /><path d="M24 14h9M24 17.500h9M24 21h9" stroke="#9a9450" /></svg></SideTool>
            <SideTool><svg viewBox="0 0 58 32"><path d="M21.500 8.500l14 14M35.500 8.500L21.500 22.500" stroke="#e8000c" strokeWidth="4.600" strokeLinecap="round" /></svg></SideTool>
            <SideTool><svg viewBox="0 0 58 32"><path d="M29 17.500l9 7" stroke="#c3ad48" strokeWidth="3.200" /><circle cx="25" cy="14" r="5.300" fill="#eee" stroke="#a09a94" strokeWidth="2" /></svg></SideTool>
            <SideTool><svg viewBox="0 0 58 32"><ellipse cx="20.500" cy="16" rx="8.800" ry="7.200" fill="#ff3b3b" stroke="#6b2020" strokeWidth="1.300" /><path d="M44.500 13.500h9l-4.500 5z" fill="#000" /></svg></SideTool>
            <SideTool $line $h={34}><svg viewBox="0 0 58 32"><rect x="19" y="7" width="15" height="10" fill="none" stroke="#8c9c8c" strokeWidth="1.500" strokeDasharray="3 1.500" /><path d="M28 13l7 1-1 2 5 7-5-3-4-1z" fill="#68a070" /></svg></SideTool>
            <SideTool $h={36}><svg viewBox="0 0 58 32"><rect x="21" y="11" width="16" height="11" fill="#f7b21c" stroke="#cf8f10" /><path d="M21 11l8 6 8-6" fill="none" stroke="#b5760c" /><path d="M21 13v5h-2.500l4 5 4-5H24v-5z" fill="#c9c06c" stroke="#8a5a20" strokeWidth=".8" /></svg></SideTool>
            <SideTool><svg viewBox="0 0 58 32"><path d="M20 13l9-8 9 8v11H20z" fill="#f0a91c" stroke="#b87c10" /><path d="M22 6h14v8l-7 4-7-4z" fill="#fff" stroke="#bbb" /><path d="M25 9h8M25 12h8" stroke="#777" /><path d="M22 15v4h-2.500l4 5 4-5H25v-4z" fill="#c9c06c" stroke="#8a5a20" strokeWidth=".8" /></svg></SideTool>
          </SideTools>
        </SidePane>
      </Middle>
      <TimeBar>
        <Clock>Time: 00:07:58</Clock>
        <NavButton $w={138} $mr={2} $f={14.7}>Power Cycle Devices</NavButton>
        <NavButton $w={128} $f={14.9}>Fast Forward Time</NavButton>
        <ModeTab $x={1848} $y={-98} width="200" height="140">
          <defs><linearGradient id="rt" gradientUnits="userSpaceOnUse" x1="0" x2="190" y1="0" y2="0"><stop offset="0" stopColor="#f8e069" /><stop offset=".45" stopColor="#f9ea9c" /><stop offset="1" stopColor="#fff" /></linearGradient></defs>
          <path d="M141.500 0V16" stroke="#888" />
          <path d="M103 72V25q0-10 10-10H166q10 0 10 10V72z" fill="#c9c9c9" stroke="#555" strokeWidth="1.300" />
          <circle cx="140" cy="46" r="20" fill="#d9d9d9" stroke="#777" strokeWidth="1.500" /><rect x="135" y="20" width="9" height="6" fill="#666" /><path d="M119 31l4-5 5 4-4 5z" fill="#666" />
          <rect x="127" y="40" width="26" height="12" fill="#444" /><path d="M130 59h41v7h-41M151 59v7M161 59v7" fill="none" stroke="#888" />
          <path d="M0 98H59V53q0-10 10-10H120q10 0 10 10V71H187q12 0 12 12V140H0z" fill="url(#rt)" />
          <path d="M0 98H59V53q0-10 10-10H120q10 0 10 10V71H187q12 0 12 12V140" fill="none" stroke="#5a563c" strokeWidth="1.400" />
          <circle cx="95.500" cy="73.500" r="22" fill="#fff" stroke="#777" strokeWidth="1.300" /><circle cx="95.500" cy="73.500" r="17.800" fill="#e0e0e4" stroke="#889" strokeWidth="1.200" />
          <path d="M96 59V73.500H83.500" fill="none" stroke="#333" strokeWidth="2" />
        </ModeTab>
        <RealtimeText>Realtime</RealtimeText>
      </TimeBar>
      <Palette>
        <Kinds>
          <KindRow>
            <I><rect width="24" height="24" fill="#7fe3e6" stroke="#48858c" /><path d="M2 4l4-2h7v10l-3 6H2z" fill={T1} /><path d="M6 12l12-4 4 3v5H8z" fill="#7cb2c4" /><Switch x={4} y={12} w={18} /></I>
            <I><path d="M12 4l3-2h5v18h-6z" fill={T1} /><path d="M3 7h11v9H3z" fill="#cfe3ec" stroke={T2} /><path d="M2 18h11l-2 4H2z" fill={T1} /></I>
            <I><rect x="2" y="4" width="20" height="16" fill="#23596a" /><path d="M4 8h5M12 7h3M4 14h8M15 12h5M15 16h5" stroke="#9cc8d5" strokeWidth="1.600" /></I>
            <I><path d="M21 1L4 12l6 2-8 9 18-12-7-1z" fill="#ff9a1c" stroke="#e0281c" strokeWidth="1.500" /></I>
            <I><path d="M3 4h7l2 3h10v13H5z" fill={T1} stroke={T2} /><path d="M19 7v13" stroke="#8fc0d0" /></I>
            <I><Cloud x={1} y={4} s={0.65} /></I>
          </KindRow>
          <KindName />
          <KindRow>
            <I><rect width="24" height="24" fill="#7fe3e6" stroke="#48858c" /><g transform="translate(0 4) scale(.74)"><Router x={0} y={0} /></g></I>
            <I><Switch x={1} y={6} w={22} /></I>
            <I><path d="M3 5l3-2h15v16l-3 2H3z" fill={T1} stroke={T2} strokeWidth=".6" /></I>
            <I><rect x="2" y="5" width="20" height="15" fill={T1} /><path d="M6 9v7M9 10v5M12 11v3M15 10v5M18 9v7" stroke="#fff" strokeWidth="1.200" /></I>
            <I><rect x="6" y="1" width="11" height="13" fill={T2} /><path d="M8 4l7 6" stroke="#fff" strokeWidth="2" /><rect x="6" y="14" width="11" height="8" fill="#6b0f14" /></I>
            <I><Cloud x={1} y={4} s={0.65} /></I>
          </KindRow>
        </Kinds>
        <Models>
          <ModelRow>
            {MODELS.map((m, i) => <Model key={i}><svg viewBox="-0.5 -0.5 33 23"><Router x={0} y={0} /></svg>{m}</Model>)}
          </ModelRow>
          <HScroll><Arrow d="M13 7l-5 5 5 5" /><HThumb $w={1699} /><Spacer /><Arrow d="M9 7l5 5-5 5" /></HScroll>
          <ModelName>CGR1240</ModelName>
        </Models>
        <Collapse><svg width="8" height="10" viewBox="0 0 8 10"><path d="M8 1v8L1 5z" fill="#555" /></svg></Collapse>
      </Palette>
      <Taskbar>
        <Task $w={68}><I w={40} h={40}><path d="M10 12l8-1v8h-8zM19.500 10.800l10-1.300v9.500h-10zM10 20.500h8v8l-8-1zM19.500 20.500h10V30l-10-1.300z" fill="#fff" /></I></Task>
        <Task $w={66}><I w={40} h={40}><circle cx="23" cy="16" r="8" fill="none" stroke="#fff" strokeWidth="1.500" /><path d="M17.500 22L8 32" stroke="#fff" strokeWidth="1.500" /></I></Task>
        <Task $w={69}><I w={40} h={40}><path d="M11 10h16.500v20H11zM8 13H5.500v14H8M30.500 13H33v14h-2.500" fill="none" stroke="#fff" strokeWidth="1.300" /></I></Task>
        <Task $w={72}><I w={40} h={40}><path d="M6.500 18C8 9 14 5.500 20.500 5.500 29 5.500 33 12 33 19v4H15c.5 5 5 7 9 7 3 0 5.500-.8 8-2v6c-3 1.500-6 2.300-9.500 2.300C13 36.300 8.500 30 9 23.500 9.500 18.500 13 15.500 16 14c-.8 1.300-1.200 3-1.200 4H25c0-3.500-2-6-5.500-6C14 12 9 14 6.500 18z" fill="#1287e0" /></I></Task>
        <Task $w={67}><I w={40} h={40}><path d="M5 8h11l3 3h16v20H5z" fill="#fbdc74" /><path d="M5 8h9v3H5z" fill="#eab83c" /><path d="M10 34V23q0-2 2-2h16q2 0 2 2v11h-5v-6h-10v6z" fill="#38a7e0" /></I></Task>
        <Task $w={71}><I w={40} h={40}><path d="M14 11V8q0-4 6-4t6 4v3" fill="none" stroke="#fff" strokeWidth="2" /><path d="M3 11h34l-1 25H4z" fill="#fff" /><path d="M13 15h6v7h-6z" fill="#e8501c" /><path d="M21 15h6v7h-6z" fill="#7cb518" /><path d="M13 24h6v7h-6z" fill="#1ca0e8" /><path d="M21 24h6v7h-6z" fill="#fbb81c" /></I></Task>
        <Task $w={71}><I w={40} h={40}><path d="M3 16L20 6l17 10v18H3z" fill="#fff" /><path d="M6 17h29L21 23l4 8-9-8z" fill="#000" /></I></Task>
        <Task $w={6} />
        <Task $w={57} $open $mr={7}><I w={40} h={40}><circle cx="20" cy="20" r="16" fill="#fbc91c" /><path d="M20 20l-7 4L6.200 12A16 16 0 0 0 18 35.900l7-12z" fill="#2fa352" /><path d="M20 12h13.800A16 16 0 0 0 6.200 12L13 24z" fill="#e2453a" /><circle cx="20" cy="20" r="7.600" fill="#fff" /><circle cx="20" cy="20" r="6" fill="#4486f0" /></I></Task>
        <Task $w={67} $open $active $mr={8}><AppIcon dark s={34} /></Task>
        <Task $w={57} $open><I w={40} h={40}><path d="M9 9h28l-5 22H4z" fill="#9cc8e8" /><path d="M12 12h21l-4 16H8z" fill="#3f78a8" /><path d="M15 15h14l-2.500 9H13z" fill="#6fa8d8" /><path d="M18 17h8l-1 4h-8z" fill="#fff" /><path d="M3 9h7M3 12h5M3 15h4" stroke="#7fa8c8" strokeWidth="1.400" /></I></Task>
        <Spacer />
        <Tray>
          <svg viewBox="0 0 34 40"><path d="M10.500 22.500l6.500-6.500 6.500 6.500" fill="none" stroke="#fff" strokeWidth="1.400" /></svg>
          <svg viewBox="0 0 34 40"><path d="M11.500 14.500h14v10h-14zM26 17.500h2v4h-2" fill="none" stroke="#fff" strokeWidth="1.400" /><path d="M13.500 16.500h10v6h-10z" fill="#fff" /><path d="M6 14h7v3q0 3-3.500 3T6 17zM8 10.500V14M11 10.500V14M9.500 20v4.500h3" stroke="#fff" strokeWidth="1.400" fill="#000" /></svg>
          <svg viewBox="0 0 34 40"><path d="M9 27A15 15 0 0 1 24 12M13 27a11 11 0 0 1 11-11M17 27a7 7 0 0 1 7-7" fill="none" stroke="#8a8a8a" strokeWidth="1.300" /><circle cx="23" cy="26" r="1.600" fill="#fff" /></svg>
          <svg viewBox="0 0 34 40"><path d="M7 17h4l5-4.500v15L11 23H7zM19 17q2 3 0 6M22 15q3.500 5 0 10M25 13q5 7 0 14" fill="none" stroke="#ddd" strokeWidth="1.300" /></svg>
          <When>2:06 PM<br />3/16/2018</When>
          <svg viewBox="0 0 34 40"><path d="M6 12h22v16h-8l-3 4-3-4H6z" fill="none" stroke="#fff" strokeWidth="1.300" /></svg>
        </Tray>
        <Task $w={22} /><Peek />
      </Taskbar>
    </Window>
  );
}
